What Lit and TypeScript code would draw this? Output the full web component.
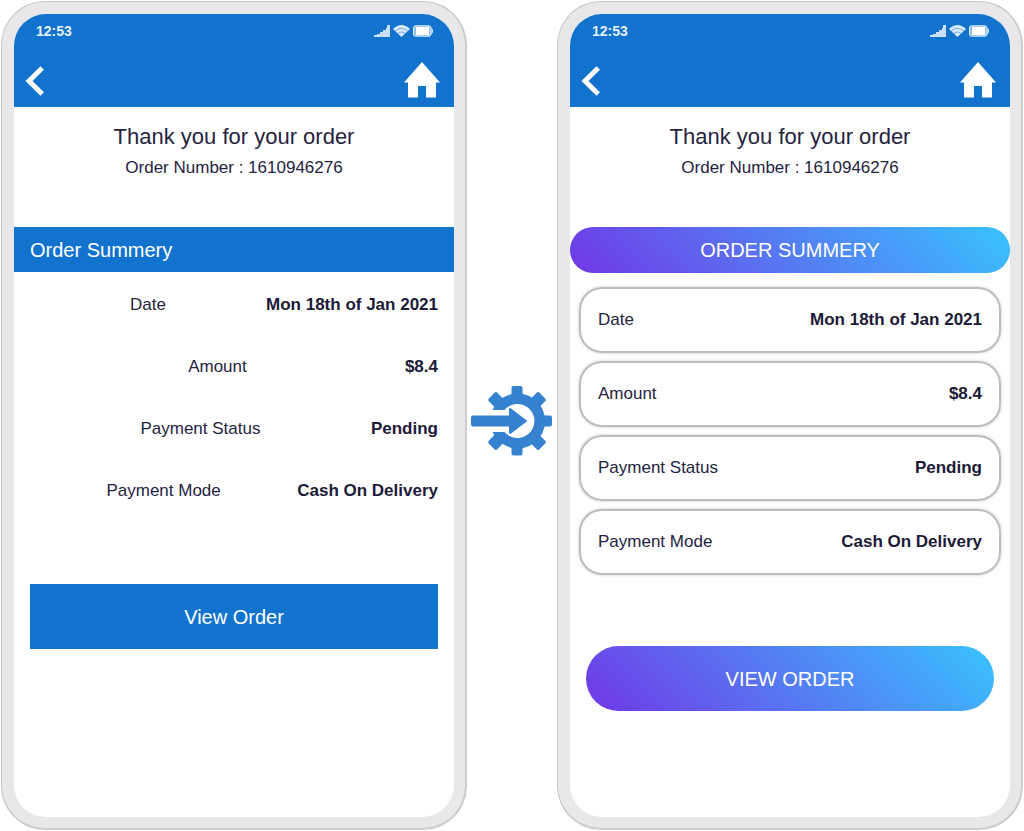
import { LitElement, html, css } from "lit";
import { customElement, property } from "lit/decorators.js";

interface SummaryRow {
  label: string;
  value: string;
}

const rows: SummaryRow[] = [
  { label: "Date", value: "Mon 18th of Jan 2021" },
  { label: "Amount", value: "$8.4" },
  { label: "Payment Status", value: "Pending" },
  { label: "Payment Mode", value: "Cash On Delivery" },
];

@customElement("phone-screen")
export class PhoneScreen extends LitElement {
  @property() variant: "classic" | "modern" = "classic";

  static styles = css`
    :host {
      display: block;
      flex: 1;
      min-width: 0;
    }
    * {
      box-sizing: border-box;
    }
    .phone {
      height: 100%;
      display: flex;
      border: 1px solid #c6c7c9;
      border-right: 2px solid #cbcccd;
      border-bottom: 2px solid #cbcccd;
      border-radius: 44px;
      background: #e8e8ea;
      padding: 12px 11px 11px 12px;
    }
    .screen {
      flex: 1;
      min-width: 0;
      display: flex;
      flex-direction: column;
      background: #ffffff;
      border-radius: 32px;
      overflow: hidden;
      color: #25233f;
      font-size: 17px;
      line-height: 20px;
    }
    .header {
      background: #1273ce;
      color: #ffffff;
      height: 93px;
    }
    .status {
      display: flex;
      justify-content: space-between;
      align-items: center;
      padding: 7px 21px 0 22px;
      height: 27px;
      font-size: 14px;
      font-weight: 700;
      color: #e4f0fb;
    }
    .indicators {
      display: flex;
      align-items: center;
      gap: 3px;
    }
    .nav {
      display: flex;
      justify-content: space-between;
      align-items: center;
      padding: 21px 14px 0 11px;
    }
    .icon-button {
      display: flex;
      border: 0;
      padding: 0;
      margin: 0;
      background: none;
      color: inherit;
      cursor: pointer;
    }
    svg {
      display: block;
    }
    .thanks {
      text-align: center;
      padding: 16px 16px 0;
      height: 120px;
    }
    .thanks h1 {
      margin: 0;
      font-size: 22px;
      line-height: 28px;
      font-weight: 400;
    }
    .thanks p {
      margin: 7px 0 0;
    }
    .title {
      margin: 0;
      font-size: 20px;
      line-height: 24px;
      font-weight: 400;
      padding: 11px 16px 10px;
      background: #1273ce;
      color: #ffffff;
    }
    .rows {
      margin: 0;
      padding: 0 16px;
    }
    .row {
      display: flex;
      align-items: center;
      height: 62px;
    }
    .row dt {
      flex: 1;
      text-align: center;
    }
    .row dd {
      margin: 0;
      font-weight: 700;
      color: #1c1a38;
    }
    .action {
      font: inherit;
      font-size: 20px;
      line-height: 24px;
      color: #ffffff;
      background: #1273ce;
      border: 0;
      margin: 62px 16px 0;
      padding: 21px 16px 20px;
      cursor: pointer;
    }
    .modern .title,
    .modern .action {
      background: linear-gradient(45deg, #7137e6, #38c3ff);
      text-transform: uppercase;
      text-align: center;
    }
    .modern .title {
      border-radius: 23px;
      padding-bottom: 11px;
    }
    .modern .action {
      border-radius: 33px;
      margin-top: 71px;
    }
    .classic .rows {
      margin-top: 2px;
    }
    .modern .rows {
      display: grid;
      gap: 8px;
      padding: 14px 9px 0;
    }
    .modern .row {
      height: 66px;
      padding: 0 17px;
      border: 2px solid #bdbdbd;
      border-radius: 23px;
      box-shadow: 0 0 3px #c4c4c4;
    }
    .modern .row dt {
      text-align: left;
    }
  `;

  render() {
    return html`
      <div class="phone">
        <main class="screen ${this.variant}">
          <header class="header">
            <div class="status">
              <time>12:53</time>
              <div class="indicators">
                <svg width="16" height="12" viewBox="0 0 16 12" fill="currentColor" aria-hidden="true">
                  <path d="M0 12V10H3V9H6V7H9V5H12V3H13V0H16V12Z" opacity=".88" />
                </svg>
                <svg width="17" height="12" viewBox="0 0 17 12" aria-hidden="true">
                  <path d="M0 4Q8.500-4 17 4L8.500 12Z" fill="currentColor" opacity=".95" />
                  <path d="M2.500 5.800Q8.500 1 14.500 5.800M5 8.300Q8.500 5.500 12 8.300" fill="none" stroke="#1273ce" stroke-width=".5" />
                </svg>
                <svg width="20" height="12" viewBox="0 0 20 12" aria-hidden="true">
                  <rect x=".5" y=".8" width="17.500" height="10.400" rx="2" fill="#8fc0ed" stroke="currentColor" />
                  <rect x="3" y="2" width="13" height="8" fill="#ffffff" />
                  <path d="M18.500 3Q20 3.500 20 6T18.500 9Z" fill="currentColor" />
                </svg>
              </div>
            </div>
            <nav class="nav">
              <button class="icon-button" type="button" aria-label="Back">
                <svg width="20" height="32" viewBox="0 0 20 32" fill="none" stroke="currentColor" stroke-width="5">
                  <path d="M17.200 4L4 17L17.200 30" />
                </svg>
              </button>
              <button class="icon-button" type="button" aria-label="Home">
                <svg width="36" height="36" viewBox="0 0 36 36" fill="currentColor">
                  <path d="M18 0L36 20.500H32V35.500H22V24H14V35.500H4V20.500H0Z" />
                </svg>
              </button>
            </nav>
          </header>
          <section class="thanks">
            <h1>Thank you for your order</h1>
            <p>Order Number : 1610946276</p>
          </section>
          <h2 class="title">Order Summery</h2>
          <dl class="rows">
            ${rows.map(
              (row) => html`<div class="row"><dt>${row.label}</dt><dd>${row.value}</dd></div>`
            )}
          </dl>
          <button class="action" type="button">View Order</button>
        </main>
      </div>
    `;
  }
}

@customElement("app-root")
export class AppRoot extends LitElement {
  static styles = css`
    :host {
      display: block;
      font-family: "Liberation Sans", Arial, Helvetica, sans-serif;
      background: #ffffff;
    }
    .page {
      box-sizing: border-box;
      min-height: 100vh;
      display: flex;
      padding: 1px;
    }
    .arrow {
      display: flex;
      align-items: center;
      padding: 10px 5px 0 4px;
    }
    svg {
      display: block;
    }
  `;

  render() {
    return html`
      <div class="page">
        <phone-screen variant="classic"></phone-screen>
        <div class="arrow">
          <svg width="81" height="70" viewBox="0 0 81 70" fill="#3582d1" aria-hidden="true">
            <g>
              <rect x="40.500" y="0" width="11" height="14" rx="2" />
              <rect x="40.500" y="55.500" width="11" height="14" rx="2" />
              <rect x="67" y="29.500" width="14" height="11" rx="2" />
              <rect x="59" y="7" width="12" height="16" rx="2" transform="rotate(45 65 16)" />
              <rect x="59" y="47" width="12" height="16" rx="2" transform="rotate(-45 65 54)" />
              <rect x="21" y="7" width="12" height="12" rx="2" transform="rotate(-45 27 16)" />
              <rect x="21" y="51" width="12" height="12" rx="2" transform="rotate(45 27 54)" />
            </g>
            <path d="M21.500 24A27.500 27.500 0 1 1 21.500 46H33.500A17 17 0 1 0 33.500 24Z" />
            <path d="M2 29.500H38V23Q38.500 21.500 40 22.500L56.500 35L40 47.500Q38.500 48.500 38 47V40.500H2Q0 40.500 0 38.500V31.500Q0 29.500 2 29.500Z" />
          </svg>
        </div>
        <phone-screen variant="modern"></phone-screen>
      </div>
    `;
  }
}
